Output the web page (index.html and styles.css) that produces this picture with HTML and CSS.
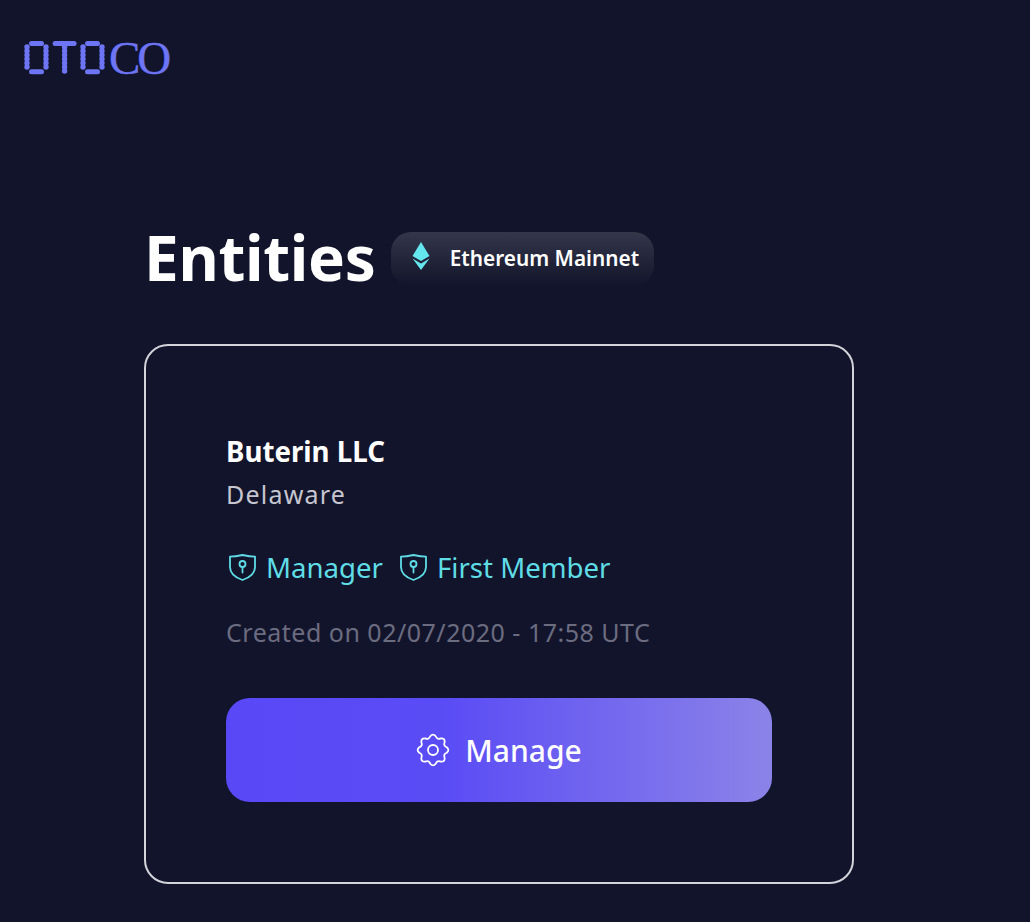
FILE: index.html
```html
<!DOCTYPE html>
<html lang="en">
<head>
<meta charset="utf-8">
<title>Otoco Entities</title>
<link rel="stylesheet" href="styles.css">
</head>
<body>
<header class="topbar">
  <div class="logo">
    <svg class="logo-mark" width="84" height="36" viewBox="0 0 84 36" fill="#6d75f4" aria-hidden="true">
      <defs>
        <g id="dots">
          <circle cx="0" cy="0" r="2.700"/><circle cx="0" cy="4" r="2.700"/><circle cx="0" cy="8" r="2.700"/><circle cx="0" cy="12" r="2.700"/><circle cx="0" cy="16" r="2.700"/><circle cx="0" cy="20" r="2.700"/>
        </g>
      </defs>
      <use href="#dots" x="3" y="7"/><use href="#dots" x="22" y="7"/>
      <rect x="5" y="1" width="15" height="5" rx="2.500"/><rect x="5" y="29.200" width="15" height="5" rx="2.500"/>
      <rect x="28.600" y="1" width="24" height="5" rx="2.500"/>
      <use href="#dots" x="40.600" y="7"/><circle cx="40.600" cy="31" r="2.700"/>
      <use href="#dots" x="59" y="7"/><use href="#dots" x="78" y="7"/>
      <rect x="61" y="1" width="15" height="5" rx="2.500"/><rect x="61" y="29.200" width="15" height="5" rx="2.500"/>
    </svg>
    <span class="logo-text">CO</span>
  </div>
</header>
<main class="content">
  <div class="title-row">
    <h1 class="title">Entities</h1>
    <div class="network">
      <svg class="eth" width="18" height="28" viewBox="0 0 18 28" fill="#64e6ee" aria-hidden="true">
        <path d="M9 0 17.500 14 9 19 .5 14Z"/>
        <path d="M.5 16.600 9 21.600 17.500 16.600 9 28Z"/>
      </svg>
      <span>Ethereum Mainnet</span>
    </div>
  </div>
  <section class="card">
    <h2 class="name">Buterin LLC</h2>
    <p class="state">Delaware</p>
    <div class="roles">
      <span class="role">
        <svg class="shield" width="29" height="29" viewBox="0 0 29 29" fill="none" stroke="#5fdde6" stroke-width="1.800" aria-hidden="true">
          <path d="M2 3.600C6 3.600 10 3 14.500 2c4.500 1 8.500 1.600 12.500 1.600V14c0 6-5 10.500-12.500 13C7 24.500 2 20 2 14Z" stroke-linejoin="round"/>
          <circle cx="14.500" cy="11" r="3"/><path d="M14.500 14v5.500" stroke-linecap="round"/>
        </svg>
        Manager
      </span>
      <span class="role">
        <svg class="shield" width="29" height="29" viewBox="0 0 29 29" fill="none" stroke="#5fdde6" stroke-width="1.800" aria-hidden="true">
          <path d="M2 3.600C6 3.600 10 3 14.500 2c4.500 1 8.500 1.600 12.500 1.600V14c0 6-5 10.500-12.500 13C7 24.500 2 20 2 14Z" stroke-linejoin="round"/>
          <circle cx="14.500" cy="11" r="3"/><path d="M14.500 14v5.500" stroke-linecap="round"/>
        </svg>
        First Member
      </span>
    </div>
    <p class="created">Created on 02/07/2020 - 17:58 UTC</p>
    <button class="manage" type="button">
      <svg width="34" height="34" viewBox="-17 -17 34 34" fill="none" stroke="#fff" stroke-width="1.800" stroke-linejoin="round" aria-hidden="true">
        <path d="M13.730 -2.730Q17 0 13.730 2.730Q10.160 4.210 11.640 7.780Q12.020 12.020 7.780 11.640Q4.210 10.160 2.730 13.730Q0 17 -2.730 13.730Q-4.210 10.160 -7.780 11.640Q-12.020 12.020 -11.640 7.780Q-10.160 4.210 -13.730 2.730Q-17 0 -13.730 -2.730Q-10.160 -4.210 -11.640 -7.780Q-12.020 -12.020 -7.780 -11.640Q-4.210 -10.160 -2.730 -13.730Q0 -17 2.730 -13.730Q4.210 -10.160 7.780 -11.640Q12.020 -12.020 11.640 -7.780Q10.160 -4.210 13.730 -2.730Z"/>
        <circle cx="0" cy="0" r="5"/>
      </svg>
      <span>Manage</span>
    </button>
  </section>
</main>
</body>
</html>
```
FILE: styles.css
```css
* { box-sizing: border-box; }
html, body { height: 100%; }
body {
  margin: 0;
  background: #12142b;
  color: #fff;
  font-family: "Noto Sans", "Open Sans", sans-serif;
  overflow: hidden;
}
.topbar { padding: 40px 0 0 24px; height: 232px; }
.logo { display: flex; align-items: center; height: 36px; }
.logo-mark { display: block; flex: none; }
.logo-text {
  font-family: "Liberation Serif", serif;
  font-size: 47px;
  line-height: 36px;
  color: #6d75f4;
  -webkit-text-stroke: .4px #6d75f4;
  letter-spacing: -3px;
  margin-left: 1px;
}
.content { padding-left: 144px; width: 854px; }
.title-row { display: flex; align-items: center; height: 54px; margin-bottom: 58px; }
.title { margin: -5px 0 0; font-size: 62px; font-weight: 700; line-height: 54px; letter-spacing: -.3px; }
.network {
  display: flex;
  align-items: center;
  gap: 20px;
  margin-left: 15px;
  width: 263px;
  height: 54px;
  padding-left: 21px;
  border-radius: 20px;
  background: linear-gradient(180deg, #34364a 0%, #12142b 100%);
  font-size: 20.800px;
  font-weight: 600;
}
.network span { margin-top: -2px; }
.eth { flex: none; margin-top: -6px; }
.card {
  height: 540px;
  border: 2px solid #d3d3da;
  border-radius: 24px;
  padding: 86px 80px 0;
}
.name { margin: 0; font-size: 27.700px; line-height: 38px; font-weight: 700; }
.state { margin: 6px 0 0; font-size: 25px; line-height: 36px; color: #c6c6d0; letter-spacing: 1.200px; }
.roles { display: flex; gap: 14px; margin-top: 35px; }
.role { display: flex; align-items: center; gap: 9px; color: #5fdde6; font-size: 27.600px; line-height: 40px; }
.shield { flex: none; margin-left: 2px; }
.created { margin: 27px 0 0; font-size: 25px; line-height: 36px; color: #6b6c80; letter-spacing: .5px; }
.manage {
  display: flex;
  align-items: center;
  justify-content: center;
  gap: 15px;
  width: 546px;
  height: 104px;
  margin-top: 48px;
  border: 0;
  border-radius: 24px;
  background: linear-gradient(90deg, #5848f6 0%, #5a4cf5 40%, #8c83e8 100%);
  color: #fff;
  font-family: inherit;
  font-size: 30px;
  font-weight: 500;
}
```
